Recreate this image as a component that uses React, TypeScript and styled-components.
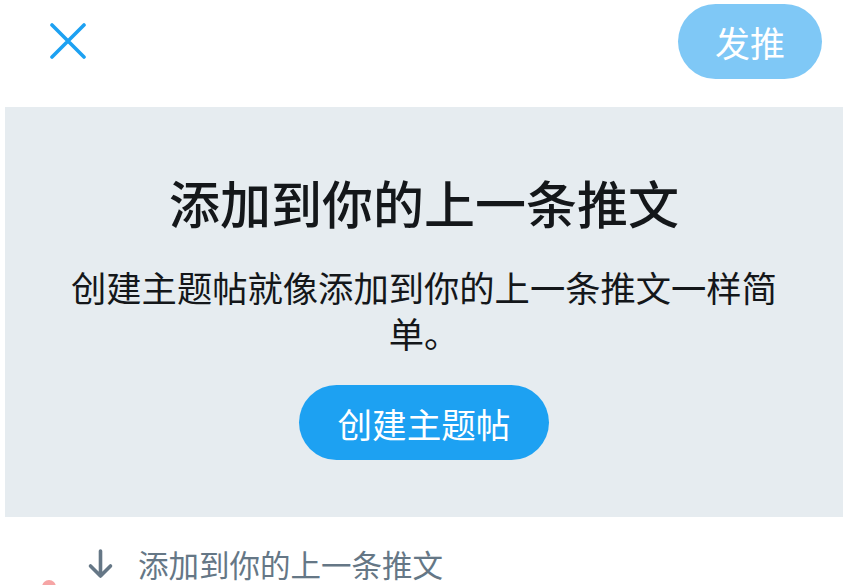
import React from 'react';
import styled, { createGlobalStyle } from 'styled-components';

const GlobalStyle = createGlobalStyle`
  html, body {
    margin: 0;
    padding: 0;
    background: #fff;
  }
  body {
    font-family: "Noto Sans CJK SC", "Noto Sans", sans-serif;
    color: #14171a;
    overflow: hidden;
  }
`;

const Page = styled.div`
  width: 843px;
  height: 585px;
  overflow: hidden;
  position: relative;
`;

const TopBar = styled.header`
  height: 82px;
  display: flex;
  align-items: center;
  justify-content: space-between;
  padding: 0 21px 0 50px;
  box-sizing: border-box;
`;

const CloseButton = styled.button`
  width: 36px;
  height: 36px;
  padding: 0;
  border: none;
  background: none;
  display: flex;
  align-items: center;
  justify-content: center;
  cursor: pointer;
`;

const PillButton = styled.button<{ $light?: boolean }>`
  border: none;
  border-radius: 999px;
  background: ${(p) => (p.$light ? '#7fc8f6' : '#1da1f2')};
  color: #fff;
  font-family: "Noto Sans CJK SC", sans-serif;
  font-weight: 400;
  cursor: pointer;
  display: flex;
  align-items: center;
  justify-content: center;
`;

const TweetButton = styled(PillButton)`
  width: 144px;
  height: 75px;
  font-size: 35px;
`;

const Panel = styled.section`
  margin: 25px 0 0 5px;
  height: 410px;
  background: #e6ecf0;
  display: flex;
  flex-direction: column;
  align-items: center;
  padding-top: 65px;
  box-sizing: border-box;
`;

const Title = styled.h1`
  margin: 0;
  font-size: 51px;
  line-height: 61px;
  font-weight: 500;
  color: #14171a;
`;

const Description = styled.p`
  margin: 31px 0 0;
  width: 728px;
  font-size: 35.3px;
  line-height: 46px;
  text-align: center;
  color: #14171a;
`;

const ThreadButton = styled(PillButton)`
  margin-top: 29px;
  width: 250px;
  height: 75px;
  font-size: 34.6px;
`;

const HintRow = styled.div`
  height: 94px;
  display: flex;
  align-items: center;
  gap: 24px;
  padding-left: 87px;
  color: #657786;
  font-size: 30.5px;
`;

const Dot = styled.span`
  position: absolute;
  left: 42px;
  top: 580px;
  width: 14px;
  height: 14px;
  border-radius: 50%;
  background: #f6a5a5;
`;

const App: React.FC = () => {
  return (
    <Page>
      <GlobalStyle />
      <TopBar>
        <CloseButton aria-label="关闭">
          <svg width="36" height="36" viewBox="0 0 36 36">
            <path
              d="M2 2 L34 34 M34 2 L2 34"
              stroke="#1da1f2"
              strokeWidth="3.6"
              strokeLinecap="round"
              fill="none"
            />
          </svg>
        </CloseButton>
        <TweetButton $light>发推</TweetButton>
      </TopBar>
      <Panel>
        <Title>添加到你的上一条推文</Title>
        <Description>创建主题帖就像添加到你的上一条推文一样简单。</Description>
        <ThreadButton>创建主题帖</ThreadButton>
      </Panel>
      <HintRow>
        <svg width="27" height="30" viewBox="0 0 27 30">
          <path
            d="M13.5 2 V27 M3.5 17 L13.5 27 L23.5 17"
            stroke="#657786"
            strokeWidth="3.6"
            strokeLinecap="round"
            strokeLinejoin="round"
            fill="none"
          />
        </svg>
        <span>添加到你的上一条推文</span>
      </HintRow>
      <Dot />
    </Page>
  );
};

export default App;
